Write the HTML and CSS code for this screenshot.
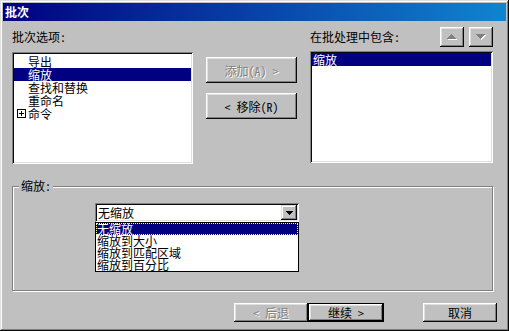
FILE: index.html
```html
<!DOCTYPE html>
<html lang="zh">
<head>
  <meta charset="UTF-8">
  <title>批次</title>
  <link rel="stylesheet" href="styles.css">
</head>
<body>

<div class="window">
  <div class="titlebar">批次</div>

  <div class="content">
    <div class="top-row">
      <div class="col col-left">
        <div class="col-head">批次选项:</div>
        <ul class="listbox">
          <li>导出</li>
          <li class="selected">缩放</li>
          <li>查找和替换</li>
          <li>重命名</li>
          <li class="tree">
            <svg class="expander" width="9" height="9" viewBox="0 0 9 9" shape-rendering="crispEdges">
              <rect x="0.5" y="0.5" width="8" height="8" fill="#fff" stroke="#000"/>
              <path d="M2 4.5H7M4.5 2V7" stroke="#000"/>
            </svg>命令
          </li>
        </ul>
      </div>

      <div class="col col-mid">
        <button class="btn wide" disabled>添加(A) &gt;</button>
        <button class="btn wide">&lt; 移除(R)</button>
      </div>

      <div class="col col-right">
        <div class="col-head">
          <span>在批处理中包含:</span>
          <div class="arrows">
            <button class="btn arrow" disabled>
              <svg width="12" height="7" viewBox="0 0 12 7" shape-rendering="crispEdges">
                <polygon points="6,1 11,6 1,6" fill="#fff"/>
                <polygon points="5,0 10,5 0,5" fill="#808080"/>
              </svg>
            </button>
            <button class="btn arrow" disabled>
              <svg width="12" height="7" viewBox="0 0 12 7" shape-rendering="crispEdges">
                <polygon points="1,1 11,1 6,6" fill="#fff"/>
                <polygon points="0,0 10,0 5,5" fill="#808080"/>
              </svg>
            </button>
          </div>
        </div>
        <ul class="listbox">
          <li class="selected">缩放</li>
        </ul>
      </div>
    </div>

    <fieldset class="group">
      <legend>缩放:</legend>
      <div class="combo">
        <span class="combo-value">无缩放</span>
        <span class="combo-btn">
          <svg width="7" height="4" viewBox="0 0 7 4" shape-rendering="crispEdges">
            <polygon points="0,0 7,0 3.5,4" fill="#000"/>
          </svg>
        </span>
      </div>
      <ul class="dropdown">
        <li class="selected focus">无缩放</li>
        <li>缩放到大小</li>
        <li>缩放到匹配区域</li>
        <li>缩放到百分比</li>
      </ul>
    </fieldset>

    <div class="footer">
      <button class="btn back" disabled>&lt; 后退</button>
      <button class="btn default">继续 &gt;</button>
      <button class="btn cancel">取消</button>
    </div>
  </div>
</div>

</body>
</html>
```

FILE: styles.css
```css
* {
  box-sizing: border-box;
}

body {
  margin: 0;
  font-family: "Noto Sans Mono CJK SC", "Noto Sans CJK SC", "DejaVu Sans Mono", monospace;
  font-size: 12px;
  color: #000;
  background: #c0c0c0;
}

.window {
  width: 509px;
  height: 331px;
  padding: 3px;
  background: #c0c0c0;
  box-shadow: inset -1px -1px #0a0a0a, inset 1px 1px #dfdfdf,
              inset -2px -2px #808080, inset 2px 2px #fff;
}

.titlebar {
  height: 18px;
  line-height: 18px;
  padding-left: 2px;
  background: linear-gradient(90deg, #000080, #1084d0);
  color: #fff;
  font-weight: bold;
}

.content {
  padding: 6px 9px 0;
}

.top-row {
  display: flex;
  height: 137px;
}

.col {
  display: flex;
  flex-direction: column;
}

.col-left {
  width: 181px;
}

.col-right {
  width: 183px;
}

.col-head {
  height: 20px;
  line-height: 20px;
  display: flex;
  justify-content: space-between;
  align-items: center;
}

.col-left .col-head {
  margin-bottom: 5px;
}

.col-right .col-head {
  margin-bottom: 4px;
}

.listbox {
  list-style: none;
  margin: 0;
  padding: 3px 2px 2px;
  height: 112px;
  background: #fff;
  box-shadow: inset 1px 1px #808080, inset -1px -1px #fff,
              inset 2px 2px #0a0a0a, inset -2px -2px #dfdfdf;
}

.listbox li {
  height: 13px;
  line-height: 13px;
  white-space: nowrap;
}

.col-left .listbox li {
  padding-left: 14px;
}

.col-left .listbox li.tree {
  padding-left: 3px;
  display: flex;
  align-items: center;
}

.expander {
  margin-right: 2px;
}

.col-right .listbox {
  padding-top: 2px;
}

.col-right .listbox li {
  padding-left: 1px;
}

.selected {
  background: #000080;
  color: #fff;
}

.col-mid {
  width: 91px;
  margin: 0 13px;
  padding-top: 30px;
  gap: 10px;
}

.btn {
  font: inherit;
  padding: 0;
  border: 0;
  background: #c0c0c0;
  color: #000;
  cursor: pointer;
  white-space: pre;
  box-shadow: inset -1px -1px #0a0a0a, inset 1px 1px #fff,
              inset -2px -2px #808080, inset 2px 2px #dfdfdf;
}

.btn:disabled {
  color: #808080;
  text-shadow: 1px 1px #fff;
  cursor: default;
}

.btn.wide {
  width: 91px;
  height: 26px;
}

.arrows {
  display: flex;
  gap: 5px;
}

.btn.arrow {
  width: 24px;
  height: 20px;
  display: flex;
  align-items: center;
  justify-content: center;
}

.group {
  margin: 15px 0 0;
  padding: 0;
  width: 481px;
  height: 112px;
  border: 1px solid #808080;
  box-shadow: 1px 1px #fff, inset 1px 1px #fff;
}

.group legend {
  margin-left: 6px;
  padding: 0 2px;
  line-height: 14px;
  background: #c0c0c0;
}

.combo {
  display: flex;
  width: 204px;
  height: 19px;
  margin: 10px 0 0 82px;
  padding: 2px;
  background: #fff;
  box-shadow: inset 1px 1px #808080, inset -1px -1px #fff,
              inset 2px 2px #0a0a0a, inset -2px -2px #dfdfdf;
}

.combo-value {
  flex: 1;
  line-height: 15px;
  padding-left: 1px;
}

.combo-btn {
  width: 16px;
  height: 15px;
  display: flex;
  align-items: center;
  justify-content: center;
  background: #c0c0c0;
  box-shadow: inset -1px -1px #0a0a0a, inset 1px 1px #dfdfdf,
              inset -2px -2px #808080, inset 2px 2px #fff;
}

.dropdown {
  list-style: none;
  margin: 0 0 0 82px;
  padding: 0;
  width: 204px;
  border: 1px solid #000;
  background: #fff;
}

.dropdown li {
  height: 12px;
  line-height: 12px;
  padding-left: 1px;
  white-space: nowrap;
}

.dropdown li.focus {
  outline: 1px dotted #ffffa0;
  outline-offset: -1px;
}

.footer {
  display: flex;
  justify-content: flex-end;
  margin-top: 12px;
}

.footer .btn {
  height: 19px;
}

.btn.back {
  width: 74px;
}

.btn.default {
  width: 76px;
  box-shadow: inset 0 0 0 1px #000, inset -2px -2px #000, inset 2px 2px #fff,
              inset -3px -3px #808080, inset 3px 3px #dfdfdf;
}

.btn.cancel {
  width: 74px;
  margin-left: 39px;
}
```
